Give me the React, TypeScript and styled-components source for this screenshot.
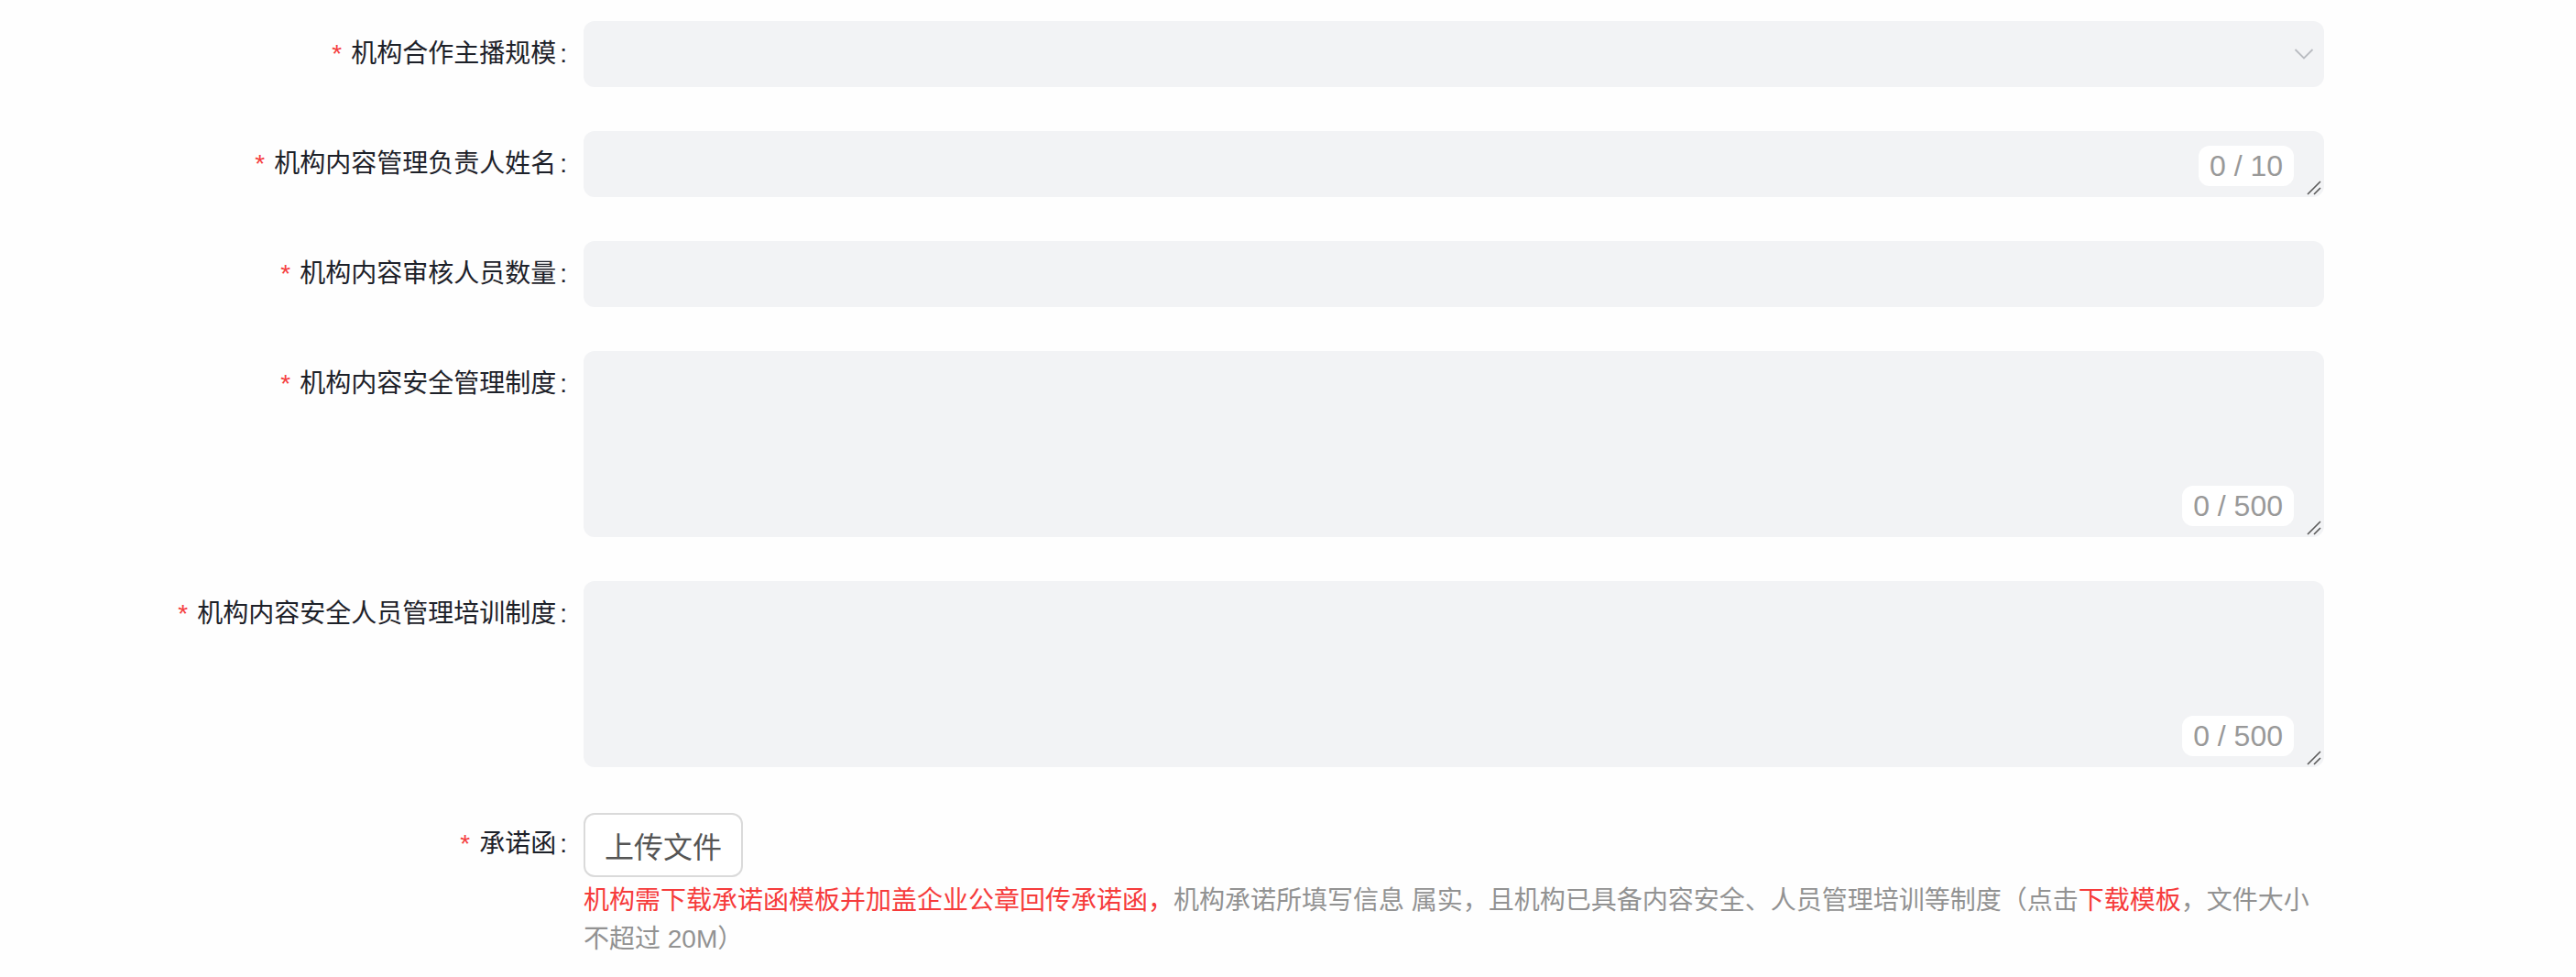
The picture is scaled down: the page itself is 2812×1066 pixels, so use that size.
import styled, { createGlobalStyle } from 'styled-components'

const GlobalStyle = createGlobalStyle`
  body {
    margin: 0;
    background: #fefefe;
    font-family: "Liberation Sans", "Noto Sans CJK SC", sans-serif;
  }
`

const Form = styled.form`
  display: flex;
  flex-direction: column;
  gap: 48px;
  padding-top: 23px;
`

const Row = styled.div`
  display: grid;
  grid-template-columns: 619px 1900px;
  column-gap: 18px;
  align-items: start;
`

const Label = styled.label`
  font-size: 28px;
  line-height: 72px;
  color: #1d2129;
  text-align: right;
  white-space: nowrap;
`

const Required = styled.span`
  color: #f53f3f;
  margin-right: 10px;
`

const Colon = styled.span`
  margin-left: 4px;
`

const Field = styled.div`
  position: relative;
  display: flex;
  flex-direction: column;
  align-items: flex-start;
`

const SelectBox = styled.div`
  width: 100%;
  height: 72px;
  box-sizing: border-box;
  display: flex;
  align-items: center;
  justify-content: flex-end;
  padding-right: 11px;
  background: #f2f3f5;
  border-radius: 12px;
  cursor: pointer;
`

const TextBox = styled.textarea<{ height: number }>`
  display: block;
  width: 100%;
  height: ${props => props.height}px;
  box-sizing: border-box;
  padding: 18px 24px;
  border: none;
  border-radius: 12px;
  background: #f2f3f5;
  font: inherit;
  font-size: 28px;
  color: #1d2129;
  resize: none;
  outline: none;
`

const TextInput = styled.input`
  display: block;
  width: 100%;
  height: 72px;
  box-sizing: border-box;
  padding: 0 24px;
  border: none;
  border-radius: 12px;
  background: #f2f3f5;
  font: inherit;
  font-size: 28px;
  color: #1d2129;
  outline: none;
`

const Counter = styled.span`
  position: absolute;
  right: 33px;
  bottom: 12px;
  height: 44px;
  padding: 0 12px;
  border-radius: 12px;
  background: #fff;
  font-size: 32px;
  line-height: 44px;
  color: #999;
`

const Grip = styled.svg`
  position: absolute;
  right: 3px;
  bottom: 2px;
`

const UploadButton = styled.button`
  height: 70px;
  margin-top: 2px;
  padding: 0 21px;
  border: 2px solid #dadada;
  border-radius: 12px;
  background: #fff;
  font-family: inherit;
  font-size: 32px;
  color: #555;
  cursor: pointer;
`

const Hint = styled.p`
  margin: 5px 0 0;
  font-size: 28px;
  line-height: 42px;
  color: #929292;
`

const Highlight = styled.span`
  color: #f63b3b;
`

function ResizeGrip() {
  return (
    <Grip width="16" height="16" viewBox="0 0 16 16">
      <path d="M1 15 L15 1 M8 15 L15 8" stroke="#5a5a5a" strokeWidth="1.6" fill="none" />
    </Grip>
  )
}

interface FieldLabelProps {
  text: string
}

function FieldLabel({ text }: FieldLabelProps) {
  return (
    <Label>
      <Required>*</Required>
      {text}
      <Colon>:</Colon>
    </Label>
  )
}

interface LimitedTextProps {
  height: number
  max: number
  value?: string
}

function LimitedText({ height, max, value = '' }: LimitedTextProps) {
  return (
    <Field>
      <TextBox height={height} maxLength={max} defaultValue={value} />
      <Counter>{value.length} / {max}</Counter>
      <ResizeGrip />
    </Field>
  )
}

export default function App() {
  return (
    <>
      <GlobalStyle />
      <Form>
        <Row>
          <FieldLabel text="机构合作主播规模" />
          <Field>
            <SelectBox>
              <svg width="22" height="14" viewBox="0 0 22 14">
                <polyline points="1.5,2 11,11.5 20.5,2" stroke="#b9bcc1" strokeWidth="1.8" fill="none" />
              </svg>
            </SelectBox>
          </Field>
        </Row>
        <Row>
          <FieldLabel text="机构内容管理负责人姓名" />
          <LimitedText height={72} max={10} />
        </Row>
        <Row>
          <FieldLabel text="机构内容审核人员数量" />
          <Field>
            <TextInput type="text" />
          </Field>
        </Row>
        <Row>
          <FieldLabel text="机构内容安全管理制度" />
          <LimitedText height={203} max={500} />
        </Row>
        <Row>
          <FieldLabel text="机构内容安全人员管理培训制度" />
          <LimitedText height={203} max={500} />
        </Row>
        <Row>
          <FieldLabel text="承诺函" />
          <Field>
            <UploadButton type="button">上传文件</UploadButton>
            <Hint>
              <Highlight>机构需下载承诺函模板并加盖企业公章回传承诺函，</Highlight>
              <span>机构承诺所填写信息 属实，且机构已具备内容安全、人员管理培训等制度（点击</span>
              <Highlight>下载模板</Highlight>
              <span>，文件大小</span>
              <span>不超过 20M）</span>
            </Hint>
          </Field>
        </Row>
      </Form>
    </>
  )
}
